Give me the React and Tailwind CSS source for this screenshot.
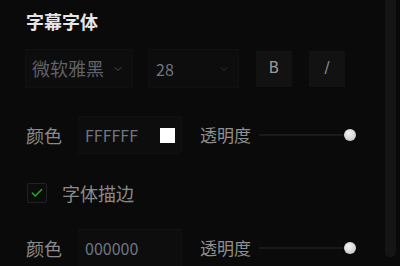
import React from 'react';
import { ChevronDown, Check } from 'lucide-react';

const font = { fontFamily: '"Microsoft YaHei", "Noto Sans CJK SC", "Noto Sans", sans-serif' };

function Slider() {
  return (
    <div className="flex items-center w-[97px] ml-[8px]">
      <div className="h-[2px] flex-1 bg-[#1a1a1a]" />
      <div className="w-[12px] h-[12px] rounded-full bg-[radial-gradient(circle_at_40%_35%,#f4f4f4,#bdbdbd)] shadow-[0_0_2px_#000]" />
    </div>
  );
}

function ColorRow({ value, swatch }) {
  return (
    <div className="flex items-center h-[38px]">
      <span className="w-[52px] ml-[1px] text-[18px] text-[#8a8a8a]">颜色</span>
      <div className="flex items-center w-[104px] h-[38px] bg-[#0d0d0d] border border-[#101010] pl-[6px] pr-[6px]">
        <span className="flex-1 text-[16px] text-[#6f7780]">{value}</span>
        {swatch && <div className="w-[15px] h-[15px] bg-white" />}
      </div>
      <span className="ml-[18px] text-[17px] text-[#8f8f8f]">透明度</span>
      <Slider />
    </div>
  );
}

export default function App() {
  return (
    <div className="w-[400px] h-[266px] bg-[#0a0a0a] overflow-hidden flex" style={font}>
      <div className="flex-1 pl-[25px] pt-[11px]">
        <h2 className="ml-[1px] text-[18px] leading-[20px] font-bold text-[#e6e6e6]">字幕字体</h2>

        <div className="flex items-center mt-[18px]">
          <div className="flex items-center w-[108px] h-[39px] bg-[#0d0d0d] border border-[#101010] pl-[6px] pr-[8px]">
            <span className="flex-1 text-[18px] text-[#5f6268]">微软雅黑</span>
            <ChevronDown size={12} strokeWidth={2} className="text-[#4a4a4a]" />
          </div>
          <div className="flex items-center w-[91px] h-[39px] ml-[15px] bg-[#0d0d0d] border border-[#101010] pl-[7px] pr-[8px]">
            <span className="flex-1 text-[16px] text-[#6f7780]">28</span>
            <ChevronDown size={12} strokeWidth={2} className="text-[#2e2e2e]" />
          </div>
          <div className="flex items-center justify-center w-[36px] h-[36px] ml-[17px] bg-[#121212] text-[15px] text-[#9a9a9a]" style={{ fontFamily: '"DejaVu Sans", sans-serif' }}>
            B
          </div>
          <div className="flex items-center justify-center w-[36px] h-[36px] ml-[17px] bg-[#121212] text-[15px] text-[#8a8a8a]" style={{ fontFamily: '"DejaVu Sans", sans-serif' }}>
            /
          </div>
        </div>

        <div className="mt-[28px]">
          <ColorRow value="FFFFFF" swatch />
        </div>

        <div className="flex items-center mt-[29px] h-[20px]">
          <div className="flex items-center justify-center w-[20px] h-[20px] ml-[2px] border border-[#222222] rounded-[2px] bg-[#0c0c0c]">
            <Check size={14} strokeWidth={2.5} className="text-[#22b022]" />
          </div>
          <span className="ml-[15px] text-[18px] text-[#8a8a8a]">字体描边</span>
        </div>

        <div className="mt-[26px]">
          <ColorRow value="000000" />
        </div>
      </div>
      <div className="w-[11px] h-[257px] mr-[4px] bg-[#151515] rounded-b-[5px]" />
    </div>
  );
}
